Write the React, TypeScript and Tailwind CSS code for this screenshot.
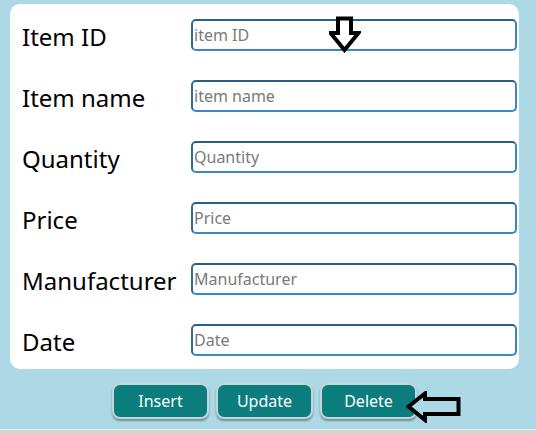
const fields = [
  { label: 'Item ID', placeholder: 'item ID' },
  { label: 'Item name', placeholder: 'item name' },
  { label: 'Quantity', placeholder: 'Quantity' },
  { label: 'Price', placeholder: 'Price' },
  { label: 'Manufacturer', placeholder: 'Manufacturer' },
  { label: 'Date', placeholder: 'Date' },
];

function DownArrow() {
  return (
    <svg className="absolute left-[329px] top-[16px]" width="32" height="37" viewBox="0 0 32 37">
      <path
        d="M9 2.5 H22 V17 H29.5 L15.5 34 L1.5 17 H9 Z"
        fill="white"
        stroke="black"
        strokeWidth="4"
        strokeLinejoin="miter"
      />
    </svg>
  );
}

function LeftArrow() {
  return (
    <svg className="absolute left-[406px] top-[391px]" width="56" height="32" viewBox="0 0 56 32">
      <path
        d="M2.5 15.5 L19 2.5 V8 H52.5 V23 H19 V29 Z"
        fill="#add8e6"
        stroke="black"
        strokeWidth="4"
        strokeLinejoin="miter"
      />
    </svg>
  );
}

export default function App() {
  return (
    <div
      className="relative w-[536px] h-[434px] bg-[#add8e6] overflow-hidden"
      style={{ fontFamily: '"Noto Sans", "Open Sans", sans-serif' }}
    >
      <div className="pl-[10px] pt-[4px] w-[519px]">
        {/* form card */}
        <div className="bg-white rounded-[10px] pt-[15px] pb-[13px] pl-[12px] pr-[2px] flex flex-col gap-[29px]">
          {fields.map((f) => (
            <div key={f.label} className="flex items-center h-[32px]">
              <label className="w-[169px] text-[24px] leading-none text-black pt-[3px] whitespace-nowrap">
                {f.label}
              </label>
              <input
                placeholder={f.placeholder}
                className="flex-1 h-[32px] rounded-[5px] border-2 border-[#3b86c8] border-t-[#2a5d87] border-l-[#2f6a9a] bg-white pl-[1px] text-[16px] text-black placeholder:text-[#7a7a7a] outline-none"
              />
            </div>
          ))}
        </div>

        {/* action buttons */}
        <div className="flex justify-center gap-[7px] mt-[14px]">
          {['Insert', 'Update', 'Delete'].map((b) => (
            <button
              key={b}
              className="w-[97px] h-[36px] rounded-[8px] bg-[#0b7d7d] text-white text-[16px] border-2 border-[#c4d6da] shadow-[0_2px_2px_rgba(0,0,0,0.35)]"
            >
              {b}
            </button>
          ))}
        </div>
      </div>

      <div className="absolute left-0 right-0 bottom-0 h-[5px] bg-[#d6d6d6] border-t border-[#ececec]" />

      <DownArrow />
      <LeftArrow />
    </div>
  );
}
